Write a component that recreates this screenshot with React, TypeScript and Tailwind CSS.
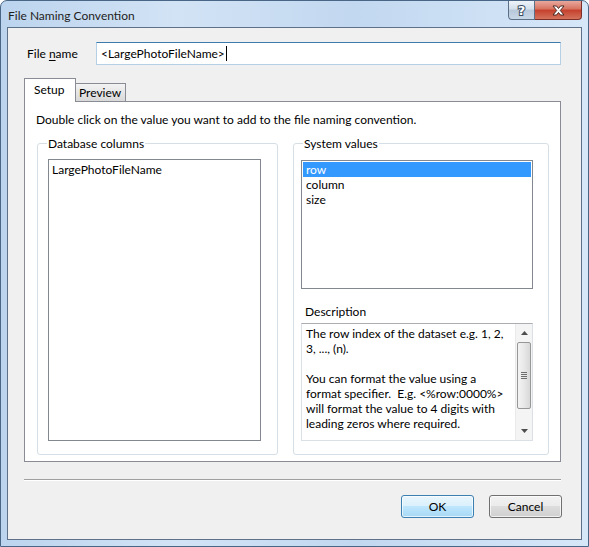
import { ReactNode } from 'react';

const font = "font-['Lato','Liberation_Sans',sans-serif] text-[12px] leading-[15px] text-black";

function GroupBox({ title, className, children }: { title: string; className: string; children: ReactNode }) {
  return (
    <div className={`flex flex-col rounded-[3px] border border-[#d5dfe5] shadow-[inset_1px_1px_0_#ffffff] ${className}`}>
      <div className="-mt-[8px] ml-[9px] w-fit bg-white px-[1px]">{title}</div>
      {children}
    </div>
  );
}

function WinButton({ label, primary }: { label: string; primary?: boolean }) {
  return (
    <button
      className={`h-[23px] w-[73px] rounded-[3px] border ${
        primary
          ? 'border-[#3c7fb1] bg-[linear-gradient(#eaf6fd_0%,#d9f0fc_50%,#bee6fd_50%,#a7d9f5_100%)]'
          : 'border-[#707070] bg-[linear-gradient(#f2f2f2_0%,#ebebeb_50%,#dddddd_50%,#cfcfcf_100%)]'
      } shadow-[inset_0_0_0_1px_rgba(255,255,255,0.7)] text-center`}
    >
      {label}
    </button>
  );
}

function DescriptionScrollbar() {
  return (
    <div className="flex w-[17px] shrink-0 flex-col items-center bg-[#f4f4f4] border-l border-[#eaeaea]">
      <div className="flex h-[18px] items-center justify-center">
        <svg width="7" height="4" viewBox="0 0 7 4">
          <path d="M3.5 0 L7 4 L0 4 Z" fill="#4d4d4d" />
        </svg>
      </div>
      <div className="flex h-[67px] w-[14px] items-center justify-center rounded-[2px] border border-[#979797] bg-[linear-gradient(90deg,#f3f3f3,#e8e8e8_50%,#d8d8d8)]">
        <div className="flex flex-col gap-[1px]">
          <div className="h-px w-[6px] bg-[#6e6e6e]" />
          <div className="h-px w-[6px] bg-[#6e6e6e]" />
          <div className="h-px w-[6px] bg-[#6e6e6e]" />
          <div className="h-px w-[6px] bg-[#6e6e6e]" />
        </div>
      </div>
      <div className="flex-1" />
      <div className="flex h-[18px] items-center justify-center">
        <svg width="7" height="4" viewBox="0 0 7 4">
          <path d="M0 0 L7 0 L3.5 4 Z" fill="#4d4d4d" />
        </svg>
      </div>
    </div>
  );
}

export default function App() {
  return (
    <div className={`w-[589px] h-[547px] bg-white ${font}`}>
      <div className="relative flex h-full flex-col rounded-t-[7px] border border-[#4a6686] bg-[linear-gradient(90deg,#bcd4ee,#d2e3f5_30%,#c2d8f0_60%,#d6e7f8)] px-[6px] pb-[6px]">
        {/* caption */}
        <div className="flex h-[26px] items-center pl-[1px] pt-[2px] text-[#1e1e1e]">File Naming Convention</div>

        <div className="absolute right-[6px] top-0 flex">
          <div className="flex h-[19px] w-[27px] items-center justify-center rounded-bl-[4px] border border-t-0 border-[#5b6f87] bg-[linear-gradient(#eef3f9,#d3dfec_45%,#b7c8db_50%,#c9d8e8)] font-['DejaVu_Sans',sans-serif] text-[13px] font-bold leading-none text-white [-webkit-text-stroke:2px_#3a4b60] [paint-order:stroke_fill]">
            ?
          </div>
          <div className="flex h-[19px] w-[47px] items-center justify-center rounded-br-[4px] border border-l-0 border-t-0 border-[#7d2f27] bg-[linear-gradient(#e8a89e,#d7735f_45%,#c4402c_50%,#d3735c)]">
            <svg width="13" height="11" viewBox="0 0 13 11">
              <path
                d="M1 1 H4.5 L6.5 3.5 L8.5 1 H12 L8.3 5.5 L12 10 H8.5 L6.5 7.5 L4.5 10 H1 L4.7 5.5 Z"
                fill="#ffffff"
                stroke="#3b1d1a"
                strokeWidth="0.9"
                strokeLinejoin="round"
              />
            </svg>
          </div>
        </div>

        {/* client area */}
        <div className="flex flex-1 flex-col border border-[#5f7188] bg-[#f0f0f0] pl-[16px] pr-[20px]">
          <div className="mt-[14px] flex h-[23px] items-center">
            <div className="w-[72px] pl-[3px]">
              File <span className="underline underline-offset-2">n</span>ame
            </div>
            <div className="flex h-[23px] w-[465px] items-center border border-[#b5cfe7] border-t-[#3d7bad] bg-white pl-[4px]">
              <span>&lt;LargePhotoFileName&gt;</span>
              <span className="ml-[1px] h-[15px] w-px bg-black" />
            </div>
          </div>

          {/* tabs */}
          <div className="relative z-10 mt-[13px] -mb-px flex h-[24px] items-end">
            <div className="h-[24px] w-[52px] border border-b-0 border-[#898c95] bg-white pl-[9px] pt-[3px]">Setup</div>
            <div className="h-[19px] w-[50px] border border-l-0 border-[#898c95] bg-[linear-gradient(#f3f3f3,#e6e6e6_50%,#d9d9d9)] pl-[3px] pt-[1px]">
              Preview
            </div>
          </div>

          <div className="flex h-[361px] flex-col border border-[#898c95] bg-white pl-[11px] pt-[10px]">
            <div>Double click on the value you want to add to the file naming convention.</div>
            <div className="mt-[16px] flex gap-[15px]">
              <GroupBox title="Database columns" className="ml-[1px] h-[312px] w-[241px]">
                <div className="ml-[10px] mt-[8px] h-[282px] w-[213px] border border-[#828790] bg-white pl-[3px] pt-[2px]">
                  LargePhotoFileName
                </div>
              </GroupBox>

              <GroupBox title="System values" className="h-[312px] w-[256px]">
                <div className="ml-[7px] mt-[9px] h-[129px] w-[232px] border border-[#828790] bg-white p-px">
                  <div className="bg-[#3399ff] pl-[3px] text-white">row</div>
                  <div className="pl-[3px]">column</div>
                  <div className="pl-[3px]">size</div>
                </div>
                <div className="ml-[11px] mt-[15px]">Description</div>
                <div className="ml-[7px] mt-[4px] flex h-[118px] w-[232px] border border-[#dbdfe6] border-t-[#abadb3] bg-white">
                  <div className="flex-1 pl-[4px] pt-[2px]">
                    <div>The row index of the dataset e.g. 1, 2,</div>
                    <div>3, ..., (n).</div>
                    <div className="h-[15px]" />
                    <div>You can format the value using a</div>
                    <div>format specifier.&nbsp; E.g. &lt;%row:0000%&gt;</div>
                    <div>will format the value to 4 digits with</div>
                    <div>leading zeros where required.</div>
                  </div>
                  <DescriptionScrollbar />
                </div>
              </GroupBox>
            </div>
          </div>

          <div className="mt-[17px] border-t border-[#a0a0a0] border-b border-b-white" />

          <div className="mt-[14px] -mr-[1px] flex justify-end gap-[15px]">
            <WinButton label="OK" primary />
            <WinButton label="Cancel" />
          </div>
        </div>
      </div>
    </div>
  );
}
